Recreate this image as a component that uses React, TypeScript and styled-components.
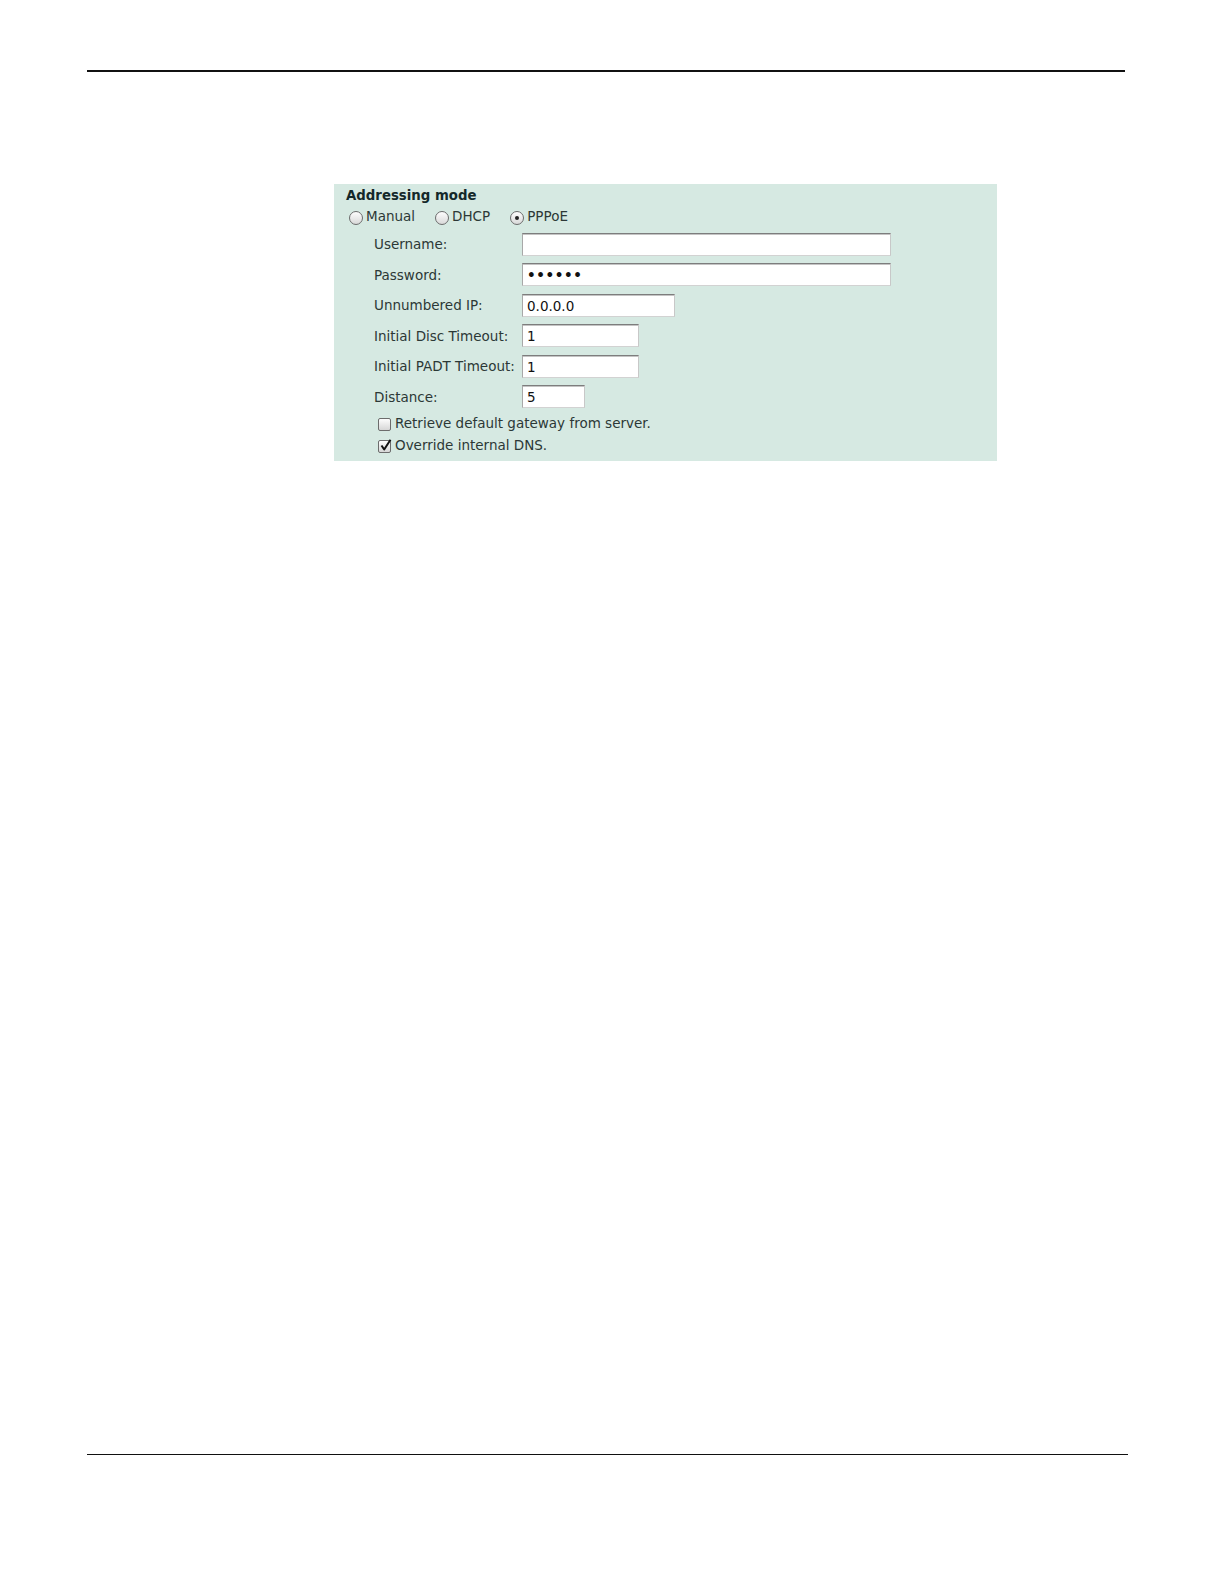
import React from 'react'
import styled, { createGlobalStyle } from 'styled-components'

const GlobalStyle = createGlobalStyle`
  html, body {
    margin: 0;
    padding: 0;
    background: #ffffff;
  }
  body {
    font-family: "DejaVu Sans", Verdana, sans-serif;
  }
`

const rows = [
  { label: 'Username:', value: '', width: 369 },
  { label: 'Password:', value: '••••••', width: 369, bold: true },
  { label: 'Unnumbered IP:', value: '0.0.0.0', width: 153 },
  { label: 'Initial Disc Timeout:', value: '1', width: 117 },
  { label: 'Initial PADT Timeout:', value: '1', width: 117 },
  { label: 'Distance:', value: '5', width: 63 },
]

export default function App() {
  return (
    <Page>
      <GlobalStyle />
      <TopRule />
      <Panel>
        <Heading>Addressing mode</Heading>
        <RadioRow>
          <RadioOption>
            <Radio />
            Manual
          </RadioOption>
          <RadioOption>
            <Radio />
            DHCP
          </RadioOption>
          <RadioOption>
            <Radio checked />
            PPPoE
          </RadioOption>
        </RadioRow>
        <Fields>
          {rows.map((r) => (
            <FieldRow key={r.label}>
              <Label>{r.label}</Label>
              <TextInput
                type="text"
                readOnly
                value={r.value}
                $width={r.width}
                $bold={r.bold}
              />
            </FieldRow>
          ))}
        </Fields>
        <Checks>
          <CheckRow>
            <Check />
            Retrieve default gateway from server.
          </CheckRow>
          <CheckRow>
            <Check>
              <svg width="13" height="13" viewBox="0 0 13 13">
                <path
                  d="M2.5 6.5 L5.2 10.5 L11.5 0.8"
                  fill="none"
                  stroke="#111"
                  strokeWidth="2"
                  strokeLinejoin="round"
                />
              </svg>
            </Check>
            Override internal DNS.
          </CheckRow>
        </Checks>
      </Panel>
      <BottomRule />
    </Page>
  )
}

const Page = styled.div`
  width: 1224px;
  height: 1584px;
  display: flex;
  flex-direction: column;
  box-sizing: border-box;
  padding-top: 70px;
`

const TopRule = styled.div`
  margin-left: 87px;
  width: 1038px;
  height: 1.5px;
  background: #111;
`

const BottomRule = styled.div`
  margin-left: 87px;
  margin-top: auto;
  margin-bottom: 129px;
  width: 1041px;
  height: 1.5px;
  background: #111;
`

const Panel = styled.div`
  margin-top: 112px;
  margin-left: 334px;
  width: 663px;
  height: 277px;
  box-sizing: border-box;
  background: #d6e9e2;
  padding: 4px 0 0 12px;
  color: #2c3836;
  font-size: 13.5px;
`

const Heading = styled.div`
  font-weight: bold;
  font-size: 13.3px;
  line-height: 16px;
  color: #14282a;
`

const RadioRow = styled.div`
  display: flex;
  gap: 20px;
  margin-top: 4px;
  margin-left: 3px;
  line-height: 16px;
`

const RadioOption = styled.label`
  display: flex;
  align-items: center;
`

const Radio = styled.span<{ checked?: boolean }>`
  position: relative;
  display: inline-block;
  width: 12px;
  height: 12px;
  margin-top: 3px;
  margin-right: 3px;
  border-radius: 50%;
  border: 1px solid #6c6c6c;
  background: linear-gradient(#fdfdfd, #d9d9d9);
  &::after {
    content: '';
    display: ${(p) => (p.checked ? 'block' : 'none')};
    position: absolute;
    left: 4px;
    top: 4px;
    width: 4px;
    height: 4px;
    border-radius: 50%;
    background: #222;
  }
`

const Fields = styled.div`
  display: flex;
  flex-direction: column;
  gap: 7.6px;
  margin-top: 8px;
  margin-left: 28px;
`

const FieldRow = styled.div`
  display: flex;
  align-items: center;
  height: 23px;
`

const Label = styled.span`
  width: 148px;
  flex: none;
`

const TextInput = styled.input<{ $width: number; $bold?: boolean }>`
  width: ${(p) => p.$width}px;
  height: 23px;
  box-sizing: border-box;
  margin: 0;
  padding: 1px 4px 0;
  border-top: 1px solid #7d7d7d;
  border-left: 1px solid #a8a8a8;
  border-right: 1px solid #c8c8c8;
  border-bottom: 1px solid #d2d2d2;
  box-shadow: inset 0 1px 0 #c4c4c4;
  background: #ffffff;
  font-family: "DejaVu Sans", Verdana, sans-serif;
  font-size: 13.5px;
  font-weight: ${(p) => (p.$bold ? 'bold' : 'normal')};
  letter-spacing: ${(p) => (p.$bold ? '0.6px' : '0')};
  color: #111;
  outline: none;
`

const Checks = styled.div`
  display: flex;
  flex-direction: column;
  margin-top: 4px;
  margin-left: 32px;
`

const CheckRow = styled.label`
  display: flex;
  align-items: center;
  height: 22px;
`

const Check = styled.span`
  display: inline-flex;
  width: 11px;
  height: 11px;
  margin-top: 2px;
  margin-right: 4px;
  border: 1px solid #6c6c6c;
  border-radius: 2px;
  background: linear-gradient(#fdfdfd, #d6d6d6);
  svg {
    margin: -2px 0 0 0;
    overflow: visible;
  }
`
